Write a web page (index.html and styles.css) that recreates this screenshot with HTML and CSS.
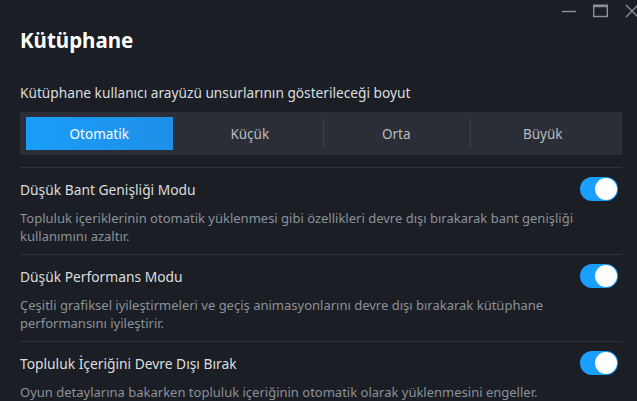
FILE: index.html
```html
<!DOCTYPE html>
<html lang="tr">
  <head>
    <title>Kütüphane</title>
    <meta charset="UTF-8">
    <link rel="stylesheet" href="styles.css">
  </head>
  <body>
    <div class="window-controls">
      <svg class="ctl" width="14" height="14" viewBox="0 0 14 14"><path d="M0 7.5h14" stroke="#8b929a" stroke-width="1.4"/></svg>
      <svg class="ctl" width="15" height="14" viewBox="0 0 15 14"><rect x="0.7" y="1.2" width="13.6" height="11.3" fill="none" stroke="#8b929a" stroke-width="1.4"/><path d="M0 2.2h15" stroke="#8b929a" stroke-width="2"/></svg>
      <svg class="ctl close" width="14" height="14" viewBox="0 0 14 14"><path d="M1 1l12 12M13 1L1 13" stroke="#8b929a" stroke-width="1.4"/></svg>
    </div>
    <main class="page">
      <h1>Kütüphane</h1>

      <section class="size-setting">
        <p class="label">Kütüphane kullanıcı arayüzü unsurlarının gösterileceği boyut</p>
        <div class="segmented">
          <button class="seg active">Otomatik</button>
          <button class="seg">Küçük</button>
          <button class="seg divided">Orta</button>
          <button class="seg divided">Büyük</button>
        </div>
      </section>

      <section class="toggle-row">
        <div class="row-head">
          <span class="row-title">Düşük Bant Genişliği Modu</span>
          <span class="switch on"><span class="knob"></span></span>
        </div>
        <p class="row-desc">Topluluk içeriklerinin otomatik yüklenmesi gibi özellikleri devre dışı bırakarak bant genişliği kullanımını azaltır.</p>
      </section>

      <section class="toggle-row">
        <div class="row-head">
          <span class="row-title">Düşük Performans Modu</span>
          <span class="switch on"><span class="knob"></span></span>
        </div>
        <p class="row-desc">Çeşitli grafiksel iyileştirmeleri ve geçiş animasyonlarını devre dışı bırakarak kütüphane performansını iyileştirir.</p>
      </section>

      <section class="toggle-row last">
        <div class="row-head">
          <span class="row-title">Topluluk İçeriğini Devre Dışı Bırak</span>
          <span class="switch on"><span class="knob"></span></span>
        </div>
        <p class="row-desc">Oyun detaylarına bakarken topluluk içeriğinin otomatik olarak yüklenmesini engeller.</p>
      </section>
    </main>
  </body>
</html>
```

FILE: styles.css
```css
body {
  margin: 0;
  padding: 0;
  background-color: #1b1e25;
  color: #dcdedf;
  font-family: 'Noto Sans', 'Open Sans', sans-serif;
  overflow: hidden;
}

.window-controls {
  position: absolute;
  top: 4px;
  right: -2px;
  display: flex;
  gap: 17px;
}

.page {
  padding: 26px 15px 0 20px;
}

h1 {
  margin: 0;
  font-size: 20.5px;
  font-weight: 700;
  color: #ffffff;
  line-height: 28px;
}

.size-setting {
  margin-top: 29px;
  padding-bottom: 12px;
  border-bottom: 1px solid #2d323b;
}

.label {
  margin: 0 0 9px;
  font-size: 13.7px;
  line-height: 20px;
  color: #dcdedf;
}

.segmented {
  display: flex;
  height: 43px;
  padding: 5px 6px;
  box-sizing: border-box;
  background-color: #2b2e37;
}

.seg {
  flex: 1 1 0;
  border: none;
  background: none;
  font-family: inherit;
  font-size: 13.5px;
  color: #b8bcbf;
  position: relative;
  padding: 0;
}

.seg.divided::before {
  content: '';
  position: absolute;
  left: 0;
  top: 2px;
  bottom: 2px;
  border-left: 1px solid #3b404a;
}

.seg.active {
  border-right: 4px solid transparent;
  background: linear-gradient(90deg, #1a9dfb, #1e8fe6) padding-box;
  color: #ffffff;
}

.toggle-row {
  padding: 9px 0 9px;
  border-bottom: 1px solid #2d323b;
}

.toggle-row.last {
  border-bottom: none;
}

.row-head {
  display: flex;
  justify-content: space-between;
  align-items: center;
  height: 24px;
  padding-right: 4px;
}

.row-title {
  font-size: 13.8px;
  color: #dcdedf;
}

.switch {
  width: 38px;
  height: 24px;
  border-radius: 12px;
  background-color: #1a9fff;
  display: flex;
  justify-content: flex-end;
  align-items: center;
  padding: 1px;
  box-sizing: border-box;
}

.knob {
  width: 22px;
  height: 22px;
  border-radius: 50%;
  background-color: #ffffff;
}

.row-desc {
  margin: 8px 0 0;
  font-size: 13px;
  line-height: 18px;
  color: #8b929a;
  padding-right: 40px;
}
```
